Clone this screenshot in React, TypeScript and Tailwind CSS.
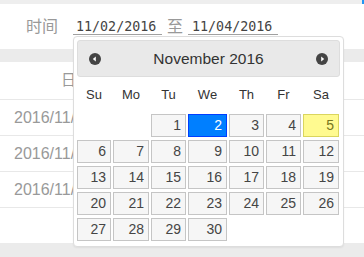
import type { ReactNode } from 'react';

const sans = "font-['Liberation_Sans',Arial,sans-serif]";
const cjk = "font-['Liberation_Sans','Noto_Sans_CJK_SC',sans-serif]";

const colW = 'grid-cols-[34px_36px_35px_39px_35px_35px_36px]';
const weekdays = ['Su', 'Mo', 'Tu', 'We', 'Th', 'Fr', 'Sa'];

const rows = [
  [null, null, 1, 2, 3, 4, 5],
  [6, 7, 8, 9, 10, 11, 12],
  [13, 14, 15, 16, 17, 18, 19],
  [20, 21, 22, 23, 24, 25, 26],
  [27, 28, 29, 30, null, null, null],
];

function ArrowIcon({ dir }: { dir: 'prev' | 'next' }) {
  return (
    <svg width="12" height="12" viewBox="0 0 12 12">
      <circle cx="6" cy="6" r="6" fill="#444" />
      {dir === 'prev' ? (
        <polygon points="3.8,6 6.8,3.6 6.8,8.4" fill="#fff" />
      ) : (
        <polygon points="8.2,6 5.2,3.6 5.2,8.4" fill="#fff" />
      )}
    </svg>
  );
}

function DayCell({ day }: { day: number | null }) {
  if (day === null) return <div />;
  let cls = 'border-[#c5c5c5] bg-[#f6f6f6] text-[#454545]';
  if (day === 2) cls = 'border-[#003eff] bg-[#007fff] text-white';
  if (day === 5) cls = 'border-[#dad55e] bg-[#fffa90] text-[#777620]';
  return (
    <div className={`flex h-[23px] items-center justify-end border pr-[4px] text-[14px] ${cls}`}>
      {day}
    </div>
  );
}

function TableRow({ children }: { children: ReactNode }) {
  return (
    <div className="flex h-[36px] items-center whitespace-nowrap border-b border-[#e8e8e8] pl-[14px] pt-[1px] text-[16px] text-[#999]">
      {children}
    </div>
  );
}

export default function App() {
  return (
    <div className={`relative h-[257px] w-[364px] overflow-hidden bg-white ${sans}`}>
      <div className="flex h-[4px] justify-end bg-[#eeeeee]">
        <div className="w-[2px] bg-[#2196f3]" />
      </div>

      <div className="flex h-[45px] items-start pl-[26px] pt-[15px]">
        <span className={`${cjk} text-[16px] leading-[16px] text-[#999]`}>时间</span>
        <span className="ml-[15px] w-[89px] border-b border-[#a0a0a0] pl-[3px] font-['DejaVu_Sans_Mono',monospace] text-[13.33px] leading-[15px] text-[#444]">
          11/02/2016
        </span>
        <span className={`${cjk} ml-[5px] text-[16px] leading-[16px] text-[#999]`}>至</span>
        <span className="ml-[5px] w-[90px] border-b border-[#a0a0a0] pl-[4px] font-['DejaVu_Sans_Mono',monospace] text-[13.33px] leading-[15px] text-[#444]">
          11/04/2016
        </span>
      </div>

      <div className="h-[13px] bg-[#ebebeb]" />

      <div className={`${cjk} flex h-[38px] items-center border-b border-[#e8e8e8] pl-[61px] text-[15px] text-[#999]`}>
        日期
      </div>
      <TableRow>2016/11/02 09:30</TableRow>
      <TableRow>2016/11/03 14:10</TableRow>
      <TableRow>2016/11/04 16:45</TableRow>
      <div className="h-[35px]" />
      <div className="h-[14px] bg-[#ebebeb]" />

      <div className="absolute left-[73px] top-[36px] w-[271px] rounded-[4px] border border-[#dddddd] bg-white px-[3px] pb-[5px] pt-[3px] shadow-[0_1px_2px_rgba(0,0,0,0.06)]">
        <div className="flex h-[37px] items-center justify-between rounded-[3px] border border-[#dddddd] bg-[#e9e9e9] px-[11px]">
          <ArrowIcon dir="prev" />
          <span className="text-[15.5px] text-[#333]">November 2016</span>
          <ArrowIcon dir="next" />
        </div>

        <div className={`grid ${colW} gap-x-[2px] text-[13px] text-[#333]`}>
          {weekdays.map((d) => (
            <div key={d} className="flex h-[34px] items-center justify-center pt-[2px]">
              {d}
            </div>
          ))}
        </div>

        <div className={`mt-[3px] grid ${colW} gap-x-[2px] gap-y-[3px]`}>
          {rows.flat().map((day, i) => (
            <DayCell key={i} day={day} />
          ))}
        </div>
      </div>
    </div>
  );
}
